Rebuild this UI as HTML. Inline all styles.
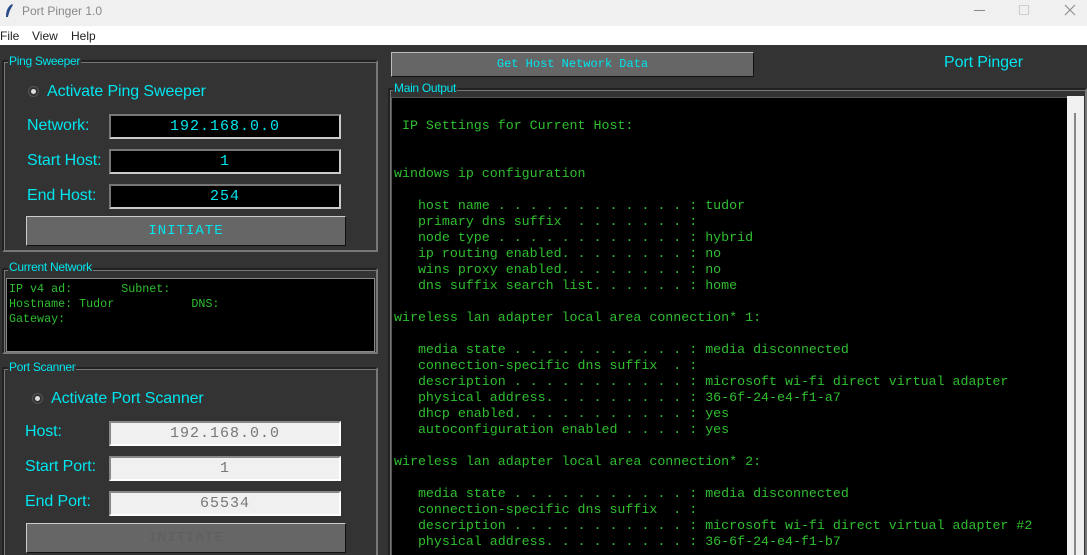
<!DOCTYPE html>
<html style="overflow:hidden;height:555px"><head><style>
*{margin:0;padding:0;box-sizing:border-box}
body{width:1087px;height:555px;overflow:hidden;background:#333;position:relative;font-family:"Liberation Sans",sans-serif}
.a{position:absolute}
.cy{color:#00e5ee}
.frame{position:absolute;border:2px solid #222;border-right-color:#777;border-bottom-color:#777;box-shadow:inset 1px 1px 0 #777}
.lg{position:absolute;background:#333;color:#00e5ee;font-size:12px;padding:0 1px;line-height:13px;letter-spacing:-0.3px}
.ent{position:absolute;height:25px;border:2px solid #777;border-right-color:#ccc;border-bottom-color:#ccc;background:#000;color:#00e5ee;text-align:center;font-family:"Liberation Mono",monospace;font-size:15px;line-height:21px;letter-spacing:1px}
.ent.d{background:#f0f0f0;color:#777;border-color:#888 #fff #fff #888}
.lbl{position:absolute;font-size:16px;color:#00e5ee;letter-spacing:-0.1px}
.btn{position:absolute;background:#666;border:1px solid #ccc;border-right-color:#111;border-bottom-color:#111;text-align:center;font-family:"Liberation Mono",monospace}
pre{font-family:"Liberation Mono",monospace;color:#2fbf2f}
</style></head><body>
<div class="a" style="left:0;top:0;width:1087px;height:26px;background:#f0f0f0"></div>
<svg class="a" style="left:4px;top:3px" width="10" height="16"><path d="M8 1 C3 4 2 9 2 14 L4 14 C5 9 7 5 9 2Z" fill="#2a4a8a"/></svg>
<div class="a" style="left:22px;top:4px;font-size:12px;color:#888">Port Pinger 1.0</div>
<div class="a" style="left:974px;top:10px;width:11px;height:1px;background:#888"></div>
<div class="a" style="left:1019px;top:5px;width:10px;height:10px;border:1px solid #ccc"></div>
<svg class="a" style="left:1064px;top:4px" width="12" height="12"><path d="M1 1L11 11M11 1L1 11" stroke="#888" stroke-width="1"/></svg>
<div class="a" style="left:0;top:26px;width:1087px;height:19px;background:#fff;font-size:12px;color:#222;line-height:19px;padding-top:1px">
<span class="a" style="left:0">File</span><span class="a" style="left:32px">View</span><span class="a" style="left:71px">Help</span></div>

<div class="frame" style="left:2px;top:60px;width:376px;height:192px"></div>
<div class="lg" style="left:8px;top:55px">Ping Sweeper</div>
<div class="a" style="left:28px;top:86px;width:11px;height:11px;border-radius:50%;border:1px solid #555;background:#333"><div style="margin:2px;width:5px;height:5px;border-radius:50%;background:#ddd"></div></div>
<div class="lbl" style="left:47px;top:83px">Activate Ping Sweeper</div>
<div class="lbl" style="left:27px;top:117px">Network:</div>
<div class="ent" style="left:109px;top:114px;width:232px">192.168.0.0</div>
<div class="lbl" style="left:27px;top:152px">Start Host:</div>
<div class="ent" style="left:109px;top:149px;width:232px">1</div>
<div class="lbl" style="left:27px;top:187px">End Host:</div>
<div class="ent" style="left:109px;top:184px;width:232px">254</div>
<div class="btn cy" style="left:26px;top:216px;width:320px;height:30px;line-height:28px;font-size:14px;letter-spacing:1px">INITIATE</div>

<div class="frame" style="left:2px;top:268px;width:376px;height:86px"></div>
<div class="lg" style="left:8px;top:261px">Current Network</div>
<div class="a" style="left:6px;top:278px;width:369px;height:74px;background:#000;border:1px solid #888"></div>
<pre class="a" style="left:9px;top:282px;font-size:11.7px;line-height:15px">IP v4 ad:       Subnet:
Hostname: Tudor           DNS:
Gateway:</pre>

<div class="frame" style="left:2px;top:367px;width:376px;height:200px"></div>
<div class="lg" style="left:8px;top:361px">Port Scanner</div>
<div class="a" style="left:32px;top:393px;width:11px;height:11px;border-radius:50%;border:1px solid #555;background:#333"><div style="margin:2px;width:5px;height:5px;border-radius:50%;background:#ddd"></div></div>
<div class="lbl" style="left:51px;top:390px">Activate Port Scanner</div>
<div class="lbl" style="left:25px;top:423px">Host:</div>
<div class="ent d" style="left:109px;top:421px;width:232px">192.168.0.0</div>
<div class="lbl" style="left:25px;top:458px">Start Port:</div>
<div class="ent d" style="left:109px;top:456px;width:232px">1</div>
<div class="lbl" style="left:25px;top:493px">End Port:</div>
<div class="ent d" style="left:109px;top:491px;width:232px">65534</div>
<div class="btn" style="left:26px;top:523px;width:320px;height:30px;line-height:28px;font-size:14px;letter-spacing:1px;color:#5e5e5e">INITIATE</div>

<div class="btn cy" style="left:391px;top:52px;width:363px;height:25px;line-height:23px;font-size:12px;border-color:#bbb #111 #111 #bbb">Get Host Network Data</div>
<div class="a cy" style="left:944px;top:54px;font-size:16px;letter-spacing:-0.1px">Port Pinger</div>
<div class="frame" style="left:388px;top:88px;width:699px;height:480px"></div>
<div class="lg" style="left:393px;top:82px">Main Output</div>
<div class="a" style="left:391px;top:97px;width:677px;height:460px;background:#000;border:1px solid #555"></div>
<div class="a" style="left:1067px;top:96px;width:17px;height:460px;background:#f0f0f0"></div>
<div class="a" style="left:1074px;top:113px;width:2px;height:442px;background:#888"></div>
<pre class="a" style="left:394px;top:118px;font-size:13.3px;line-height:16px"> IP Settings for Current Host:


windows ip configuration

   host name . . . . . . . . . . . . : tudor
   primary dns suffix  . . . . . . . :
   node type . . . . . . . . . . . . : hybrid
   ip routing enabled. . . . . . . . : no
   wins proxy enabled. . . . . . . . : no
   dns suffix search list. . . . . . : home

wireless lan adapter local area connection* 1:

   media state . . . . . . . . . . . : media disconnected
   connection-specific dns suffix  . :
   description . . . . . . . . . . . : microsoft wi-fi direct virtual adapter
   physical address. . . . . . . . . : 36-6f-24-e4-f1-a7
   dhcp enabled. . . . . . . . . . . : yes
   autoconfiguration enabled . . . . : yes

wireless lan adapter local area connection* 2:

   media state . . . . . . . . . . . : media disconnected
   connection-specific dns suffix  . :
   description . . . . . . . . . . . : microsoft wi-fi direct virtual adapter #2
   physical address. . . . . . . . . : 36-6f-24-e4-f1-b7</pre>
</body></html>
